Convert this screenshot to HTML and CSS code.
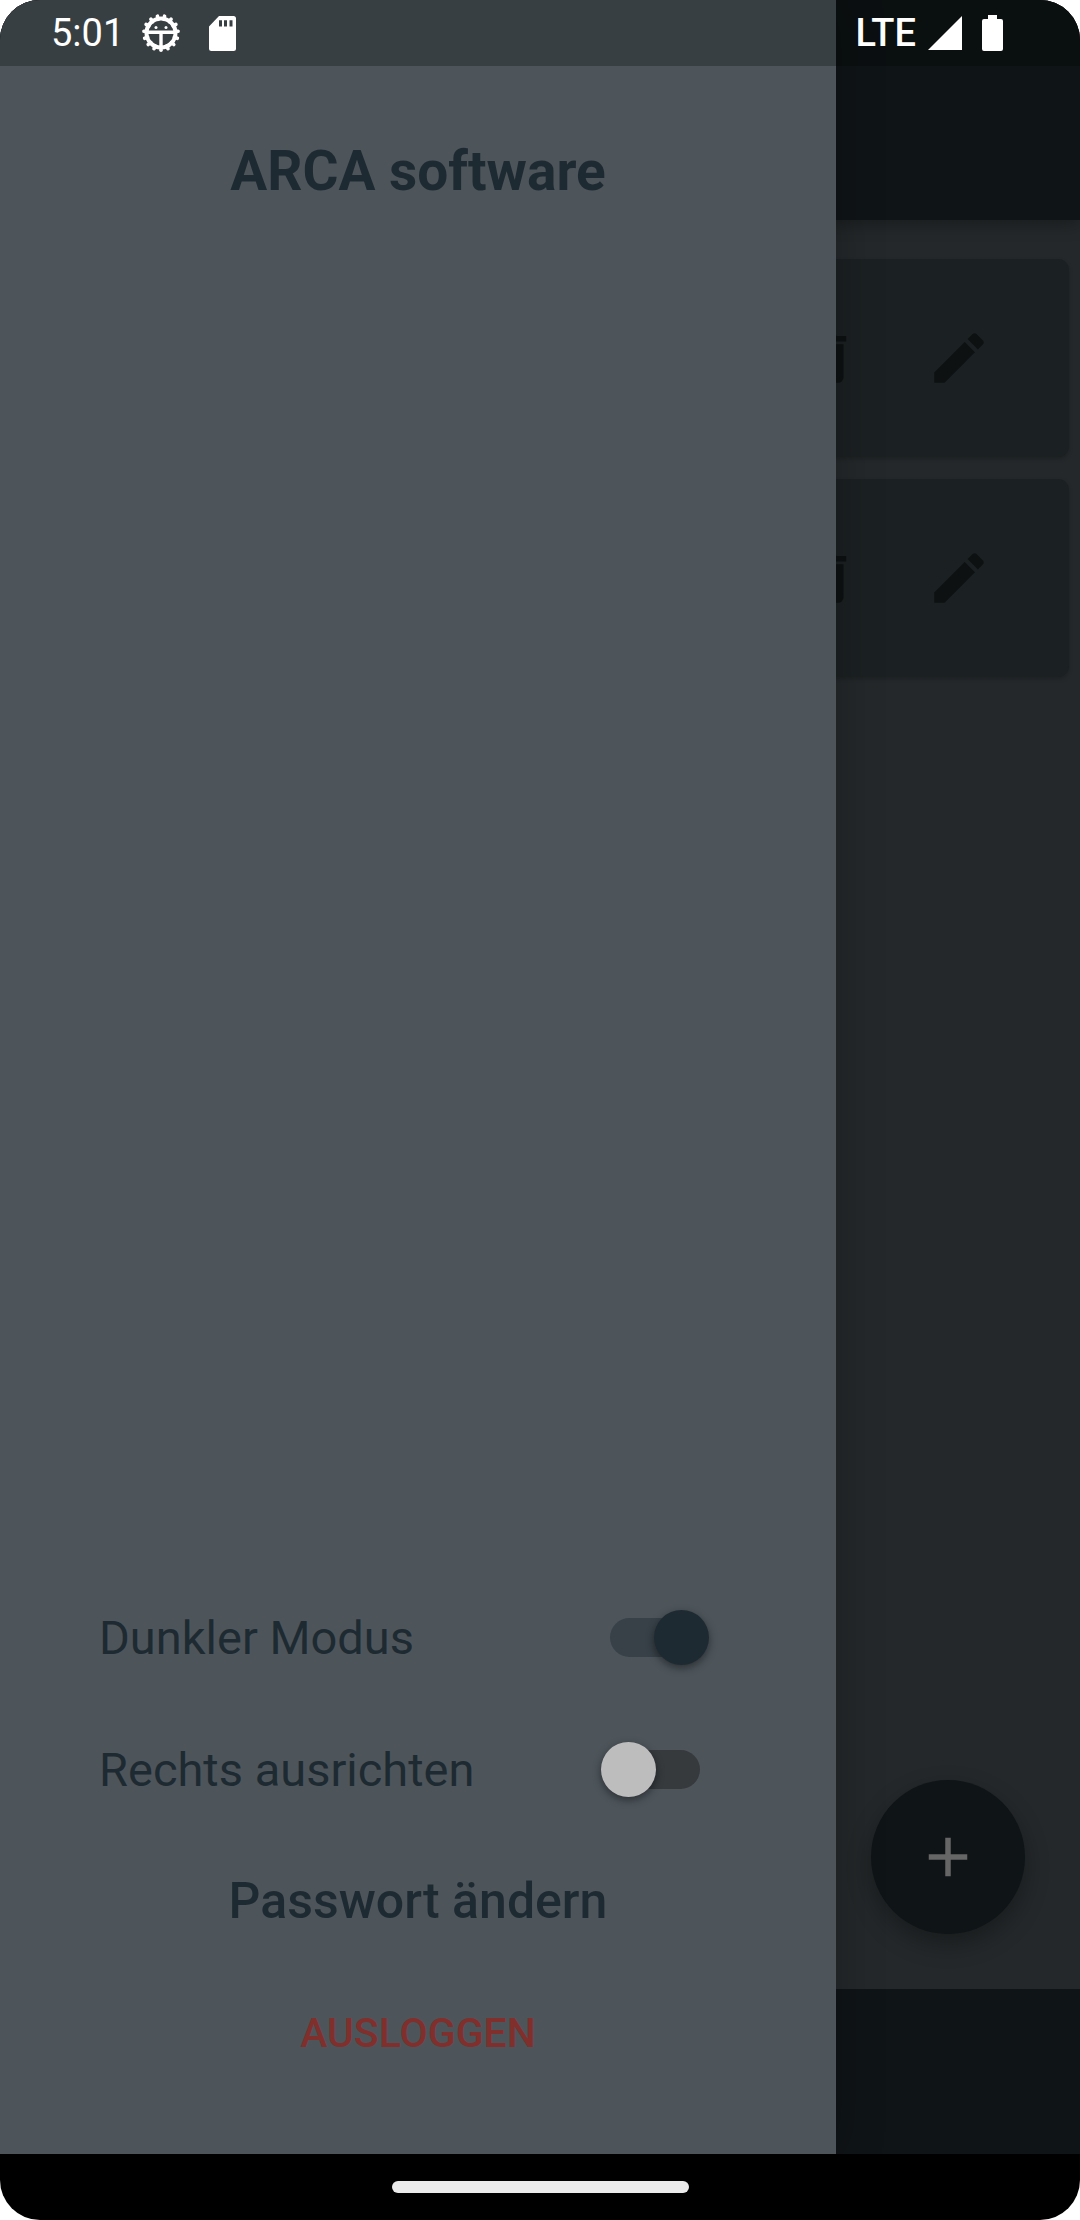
FILE: index.html
```html
<!DOCTYPE html>
<html lang="de">
<head>
<meta charset="utf-8">
<meta name="viewport" content="width=device-width, initial-scale=1">
<title>ARCA software</title>
<link rel="stylesheet" href="styles.css">
</head>
<body>
<div class="device">
  <div class="screen">
    <div class="app">
      <header class="app-bar"></header>
      <main class="content">
        <ul class="cards">
          <li class="card">
            <button class="icon-button" type="button" aria-label="Löschen">
              <svg class="icon" viewBox="0 0 24 24"><path d="M19,4H15.5L14.5,3H9.5L8.5,4H5V6H19M6,19A2,2 0 0,0 8,21H16A2,2 0 0,0 18,19V7H6V19Z"/></svg>
            </button>
            <button class="icon-button" type="button" aria-label="Bearbeiten">
              <svg class="icon" viewBox="0 0 24 24"><path d="M20.71,7.04C21.1,6.65 21.1,6 20.71,5.63L18.37,3.29C18,2.9 17.35,2.9 16.96,3.29L15.12,5.12L18.87,8.87M3,17.25V21H6.75L17.81,9.93L14.06,6.18L3,17.25Z"/></svg>
            </button>
          </li>
          <li class="card">
            <button class="icon-button" type="button" aria-label="Löschen">
              <svg class="icon" viewBox="0 0 24 24"><path d="M19,4H15.5L14.5,3H9.5L8.5,4H5V6H19M6,19A2,2 0 0,0 8,21H16A2,2 0 0,0 18,19V7H6V19Z"/></svg>
            </button>
            <button class="icon-button" type="button" aria-label="Bearbeiten">
              <svg class="icon" viewBox="0 0 24 24"><path d="M20.71,7.04C21.1,6.65 21.1,6 20.71,5.63L18.37,3.29C18,2.9 17.35,2.9 16.96,3.29L15.12,5.12L18.87,8.87M3,17.25V21H6.75L17.81,9.93L14.06,6.18L3,17.25Z"/></svg>
            </button>
          </li>
        </ul>
        <button class="fab" type="button" aria-label="Hinzufügen">
          <svg class="icon" viewBox="0 0 24 24"><path d="M19,13H13V19H11V13H5V11H11V5H13V11H19V13Z"/></svg>
        </button>
      </main>
      <footer class="bottom-bar"></footer>
    </div>

    <aside class="drawer">
      <h1 class="drawer-title">ARCA software</h1>
      <div class="drawer-menu">
        <div class="setting">
          <label for="dark-mode">Dunkler Modus</label>
          <input class="switch" id="dark-mode" type="checkbox" role="switch" checked>
        </div>
        <div class="setting">
          <label for="align-right">Rechts ausrichten</label>
          <input class="switch" id="align-right" type="checkbox" role="switch">
        </div>
        <button class="menu-button" type="button">Passwort ändern</button>
        <button class="menu-button logout" type="button">AUSLOGGEN</button>
      </div>
    </aside>

    <div class="status-bar">
      <div class="status-group">
        <span class="clock">5:01</span>
        <svg class="gear" viewBox="0 0 40 40">
          <circle cx="20" cy="20" r="14.5" fill="none" stroke="#fff" stroke-width="4"/>
          <g stroke="#fff" stroke-width="3.6" stroke-linecap="round">
            <path id="tooth" d="M20 37.2V34"/>
            <use href="#tooth" transform="rotate(24 20 20)"/>
            <use href="#tooth" transform="rotate(48 20 20)"/>
            <use href="#tooth" transform="rotate(72 20 20)"/>
            <use href="#tooth" transform="rotate(96 20 20)"/>
            <use href="#tooth" transform="rotate(120 20 20)"/>
            <use href="#tooth" transform="rotate(144 20 20)"/>
            <use href="#tooth" transform="rotate(168 20 20)"/>
            <use href="#tooth" transform="rotate(192 20 20)"/>
            <use href="#tooth" transform="rotate(216 20 20)"/>
            <use href="#tooth" transform="rotate(240 20 20)"/>
            <use href="#tooth" transform="rotate(264 20 20)"/>
            <use href="#tooth" transform="rotate(288 20 20)"/>
            <use href="#tooth" transform="rotate(312 20 20)"/>
            <use href="#tooth" transform="rotate(336 20 20)"/>
          </g>
          <path d="M7 19.2H33M20 19V34" fill="none" stroke="#fff" stroke-width="3.4"/>
          <circle cx="15" cy="14.5" r="1.5" fill="#fff"/>
          <circle cx="25" cy="14.5" r="1.5" fill="#fff"/>
        </svg>
        <svg class="sd-card" viewBox="0 0 27 35">
          <path fill="#fff" fill-rule="evenodd" d="M10 0H24.5A2.5 2.5 0 0 1 27 2.5V32.500A2.500 2.500 0 0 1 24.500 35H2.500A2.500 2.500 0 0 1 0 32.500V10.500ZM10 4.300V10.500H13V4.300ZM15 4.300V10.500H18V4.300ZM20.500 4.300V10.500H23.500V4.300Z"/>
        </svg>
      </div>
      <div class="status-group">
        <span class="network">LTE</span>
        <svg class="signal" viewBox="0 0 34 34"><path fill="#fff" d="M34 0V34H0Z"/></svg>
        <svg class="battery" viewBox="0 0 21 36"><path fill="#fff" d="M6 0H15V4H19A2 2 0 0 1 21 6V34A2 2 0 0 1 19 36H2A2 2 0 0 1 0 34V6A2 2 0 0 1 2 4H6Z"/></svg>
      </div>
    </div>
  </div>
  <div class="nav-bar"><div class="nav-handle"></div></div>
</div>
</body>
</html>
```
FILE: styles.css
```css
* {
  box-sizing: border-box;
}

body {
  margin: 0;
  background: #fff;
  font-family: Roboto, "Liberation Sans", sans-serif;
}

button {
  padding: 0;
  border: 0;
  background: none;
  font: inherit;
  color: inherit;
}

.device {
  display: flex;
  flex-direction: column;
  min-height: 100vh;
  overflow: hidden;
  border-radius: 40px;
  background: #000;
}

/* The app, the drawer and the status bar share one grid cell. */
.screen {
  flex: 1;
  display: grid;
  overflow: hidden;
}

.app,
.drawer,
.status-bar {
  grid-area: 1 / 1;
}

.app {
  display: flex;
  flex-direction: column;
  background: #24282a;
}

.app-bar {
  height: 220px;
  background: #0f1417;
  box-shadow: 0 4px 16px rgba(0, 0, 0, 0.3);
}

.content {
  flex: 1;
  display: flex;
  flex-direction: column;
  padding-top: 39px;
}

.cards {
  display: flex;
  flex-direction: column;
  gap: 22px;
  margin: 0;
  padding: 0 11px;
  list-style: none;
}

.card {
  display: flex;
  align-items: center;
  justify-content: flex-end;
  gap: 66px;
  height: 198px;
  padding-right: 77px;
  border-radius: 11px;
  background: #1b2022;
  box-shadow: 0 2px 4px rgba(0, 0, 0, 0.2);
}

.icon-button {
  display: flex;
  color: #0d1112;
}

.icon {
  width: 66px;
  height: 66px;
  fill: currentColor;
}

.fab {
  display: flex;
  align-items: center;
  justify-content: center;
  align-self: flex-end;
  width: 154px;
  height: 154px;
  margin: auto 55px 55px 0;
  border-radius: 50%;
  background: #0f1417;
  color: #666;
  box-shadow: 0 10px 24px rgba(0, 0, 0, 0.3);
}

.bottom-bar {
  height: 165px;
  background: #0f1417;
}

.drawer {
  z-index: 1;
  display: flex;
  flex-direction: column;
  justify-content: space-between;
  width: calc(100% - 244px);
  padding: 105px 0 55px;
  background: #4d555b;
  color: #1e2a31;
  box-shadow: 0 0 44px rgba(0, 0, 0, 0.25);
}

.drawer-title {
  margin: 0;
  font-size: 55px;
  font-weight: 700;
  line-height: 132px;
  text-align: center;
}

.drawer-menu {
  display: flex;
  flex-direction: column;
}

.setting {
  display: flex;
  align-items: center;
  justify-content: space-between;
  height: 132px;
  padding: 0 127px 0 99px;
  font-size: 47px;
}

.switch {
  position: relative;
  width: 108px;
  height: 55px;
  margin: 0;
  appearance: none;
}

.switch::before,
.switch::after {
  content: "";
  position: absolute;
}

.switch::before {
  inset: 8px 9px;
  border-radius: 20px;
  background: #363a3d;
}

.switch::after {
  top: 0;
  left: 0;
  width: 55px;
  height: 55px;
  border-radius: 50%;
  background: #bdbdbd;
  box-shadow: 0 3px 8px rgba(0, 0, 0, 0.45);
}

.switch:checked::before {
  background: #374147;
}

.switch:checked::after {
  right: 0;
  left: auto;
  background: #1e2a31;
}

.menu-button {
  height: 132px;
  font-size: 50px;
  font-weight: 500;
}

.logout {
  font-size: 41px;
  color: #812f2c;
}

.status-bar {
  z-index: 2;
  align-self: start;
  display: flex;
  justify-content: space-between;
  height: 66px;
  padding: 0 77px 0 51px;
  background: rgba(0, 4, 0, 0.27);
  color: #fff;
}

.status-group {
  display: flex;
  align-items: center;
}

.clock,
.network {
  font-size: 38px;
}

.gear {
  width: 40px;
  height: 40px;
  margin: 0 28px 0 17px;
}

.sd-card {
  width: 27px;
  height: 35px;
}

.network {
  font-weight: 500;
}

.signal {
  width: 34px;
  height: 34px;
  margin: 0 20px 0 12px;
}

.battery {
  width: 21px;
  height: 36px;
}

.nav-bar {
  display: flex;
  align-items: center;
  justify-content: center;
  height: 66px;
}

.nav-handle {
  width: 297px;
  height: 12px;
  border-radius: 6px;
  background: #ebebeb;
}
```
